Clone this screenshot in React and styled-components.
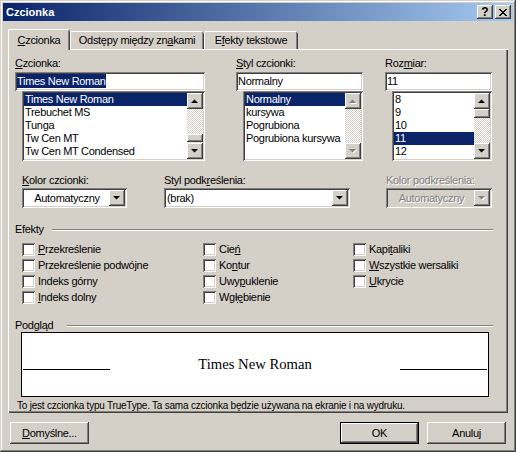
import React from 'react';
import styled, { createGlobalStyle, css } from 'styled-components';

const FACE = '#d4d0c8';
const NAVY = '#0a246a';

const GlobalStyle = createGlobalStyle`
  html, body {
    margin: 0;
    padding: 0;
    background: ${FACE};
  }
  body {
    font-family: "Liberation Sans", Arial, sans-serif;
    font-size: 11px;
    letter-spacing: -0.3px;
    color: #000;
  }
`;

const raised = css`
  background: ${FACE};
  box-shadow: inset -1px -1px #404040, inset 1px 1px #fff, inset -2px -2px #808080,
    inset 2px 2px ${FACE};
`;

const sunken = css`
  box-shadow: inset 1px 1px #808080, inset -1px -1px #fff, inset 2px 2px #404040,
    inset -2px -2px ${FACE};
`;

const Window = styled.div`
  width: 516px;
  height: 452px;
  box-sizing: border-box;
  padding: 3px;
  background: ${FACE};
  box-shadow: inset -1px -1px #404040, inset 1px 1px ${FACE}, inset -2px -2px #808080,
    inset 2px 2px #fff;
  display: flex;
  flex-direction: column;
`;

const TitleBar = styled.div`
  height: 18px;
  flex-shrink: 0;
  display: flex;
  align-items: center;
  padding: 0 2px;
  background: linear-gradient(to right, ${NAVY}, #a6caf0);
  color: #fff;
  font-weight: bold;
  letter-spacing: 0;
`;

const Title = styled.span`
  flex: 1;
  padding-left: 1px;
`;

const CaptionButton = styled.div`
  ${raised}
  width: 16px;
  height: 14px;
  display: flex;
  align-items: center;
  justify-content: center;
  margin-left: ${(p) => p.$gap || 0}px;
  color: #000;
  font-weight: bold;
  font-size: 12px;
  line-height: 14px;
`;

const TabStrip = styled.div`
  display: flex;
  align-items: flex-end;
  height: 21px;
  margin: 8px 0 -1px 5px;
  position: relative;
  z-index: 1;
  flex-shrink: 0;
`;

const Tab = styled.div`
  width: ${(p) => p.$w}px;
  box-sizing: border-box;
  height: ${(p) => (p.$active ? 21 : 18)}px;
  margin-bottom: ${(p) => (p.$active ? 0 : 1)}px;
  padding-top: ${(p) => (p.$active ? 5 : 3)}px;
  text-align: center;
  line-height: 13px;
  white-space: nowrap;
  background: ${FACE};
  border-radius: 2px 2px 0 0;
  box-shadow: inset 1px 0 #fff, inset 0 1px #fff, inset -1px 0 #404040, inset -2px 0 #808080;
`;

const U = styled.span`
  text-decoration: underline;
`;

const Panel = styled.div`
  width: 500px;
  height: 364px;
  box-sizing: border-box;
  margin-left: 5px;
  padding-top: 8px;
  flex-shrink: 0;
  display: flex;
  flex-direction: column;
  box-shadow: inset 1px 1px #fff, inset -1px -1px #404040, inset -2px -2px #808080;
`;

const Row = styled.div`
  display: flex;
  margin-top: ${(p) => p.$mt || 0}px;
`;

const Column = styled.div`
  display: flex;
  flex-direction: column;
  width: ${(p) => p.$w}px;
  margin-left: ${(p) => p.$ml}px;
`;

const Label = styled.div`
  height: 13px;
  line-height: 13px;
  margin-bottom: ${(p) => p.$mb ?? 2}px;
  white-space: nowrap;
  color: ${(p) => (p.$disabled ? '#808080' : '#000')};
  text-shadow: ${(p) => (p.$disabled ? '1px 1px #fff' : 'none')};
`;

const TextField = styled.div`
  ${sunken}
  background: #fff;
  height: 19px;
  box-sizing: border-box;
  padding: 2px 2px 0 2px;
  line-height: 15px;
  white-space: nowrap;
`;

const Selected = styled.span`
  background: ${NAVY};
  color: #fff;
  padding: 1px 0;
`;

const ListBox = styled.div`
  ${sunken}
  background: #fff;
  height: 70px;
  margin-left: 7px;
  box-sizing: border-box;
  padding: 2px;
  display: flex;
`;

const Items = styled.div`
  flex: 1;
  overflow: hidden;
`;

const Item = styled.div`
  height: 13px;
  line-height: 13px;
  padding-left: 1px;
  white-space: nowrap;
  background: ${(p) => (p.$sel ? NAVY : 'transparent')};
  color: ${(p) => (p.$sel ? '#fff' : '#000')};
`;

const ScrollBar = styled.div`
  width: 16px;
  display: flex;
  flex-direction: column;
`;

const ArrowButton = styled.div`
  ${raised}
  width: 16px;
  height: 16px;
  flex-shrink: 0;
  display: flex;
  align-items: center;
  justify-content: center;
`;

const Track = styled.div`
  flex: 1;
  display: flex;
  flex-direction: column;
  background: repeating-conic-gradient(#fff 0 25%, ${FACE} 0 50%) 0 0 / 2px 2px;
`;

const Thumb = styled.div`
  ${raised}
  height: ${(p) => p.$h}px;
  margin-top: ${(p) => p.$top}px;
`;

const Combo = styled.div`
  ${sunken}
  height: 20px;
  box-sizing: border-box;
  padding: 2px;
  display: flex;
  background: ${(p) => (p.$disabled ? FACE : '#fff')};
`;

const ComboText = styled.div`
  flex: 1;
  line-height: 16px;
  padding-left: 1px;
  white-space: nowrap;
  text-align: ${(p) => (p.$center ? 'center' : 'left')};
  color: ${(p) => (p.$disabled ? '#808080' : '#000')};
  text-shadow: ${(p) => (p.$disabled ? '1px 1px #fff' : 'none')};
`;

const GroupHeader = styled.div`
  display: flex;
  align-items: center;
  height: 13px;
  padding-left: 7px;
  margin-right: 15px;
  margin-top: ${(p) => p.$mt}px;
`;

const GroupLabel = styled.span`
  width: ${(p) => p.$w}px;
  line-height: 13px;
  flex-shrink: 0;
`;

const GroupLine = styled.div`
  flex: 1;
  border-top: 1px solid #808080;
  border-bottom: 1px solid #fff;
`;

const CheckGrid = styled.div`
  display: flex;
  margin-top: 5px;
  padding-left: 14px;
`;

const CheckColumn = styled.div`
  width: ${(p) => p.$w}px;
  display: flex;
  flex-direction: column;
`;

const Check = styled.div`
  display: flex;
  align-items: center;
  height: 16px;
  line-height: 13px;
  white-space: nowrap;
`;

const CheckBox = styled.span`
  ${sunken}
  width: 13px;
  height: 13px;
  flex-shrink: 0;
  margin-right: 3px;
  background: #fff;
`;

const Preview = styled.div`
  margin-left: 13px;
  width: 468px;
  height: 65px;
  box-sizing: border-box;
  border: 1px solid #000;
  background: #fff;
  display: flex;
  align-items: center;
  padding: 0 1px;
`;

const SampleLine = styled.div`
  width: 87px;
  height: 1px;
  margin-top: 10px;
  background: #000;
`;

const SampleText = styled.div`
  flex: 1;
  text-align: center;
  font-family: "Liberation Serif", "Times New Roman", serif;
  font-size: 14.67px;
  letter-spacing: 0;
`;

const Info = styled.div`
  margin: 2px 0 0 9px;
  line-height: 13px;
  font-size: 10px;
  letter-spacing: -0.22px;
  white-space: nowrap;
`;

const ButtonRow = styled.div`
  display: flex;
  margin-top: 9px;
  padding: 0 7px;
`;

const Button = styled.div`
  ${raised}
  width: 79px;
  height: 22px;
  box-sizing: border-box;
  margin-left: ${(p) => p.$ml || 0}px;
  display: flex;
  align-items: center;
  justify-content: center;
  ${(p) =>
    p.$default &&
    css`
      box-shadow: inset 0 0 0 1px #000, inset -2px -2px #404040, inset 2px 2px #fff,
        inset -3px -3px #808080;
    `}
`;

const Spacer = styled.div`
  flex: 1;
`;

function Arrow({ dir = 'down', disabled }) {
  const pts = dir === 'up' ? '0,4 7,4 3.5,0.5' : '0,0 7,0 3.5,3.5';
  return (
    <svg width="8" height="5" viewBox="0 0 8 5" style={{ overflow: 'visible' }}>
      {disabled && <polygon points={pts} fill="#fff" transform="translate(1,1)" />}
      <polygon points={pts} fill={disabled ? '#808080' : '#000'} />
    </svg>
  );
}

function Scroller({ thumbTop, thumbH, disabled }) {
  return (
    <ScrollBar>
      <ArrowButton>
        <Arrow dir="up" disabled={disabled} />
      </ArrowButton>
      <Track>{!disabled && <Thumb $top={thumbTop} $h={thumbH} />}</Track>
      <ArrowButton>
        <Arrow dir="down" disabled={disabled} />
      </ArrowButton>
    </ScrollBar>
  );
}

function List({ items, selected, scroll }) {
  return (
    <ListBox>
      <Items>
        {items.map((it) => (
          <Item key={it} $sel={it === selected}>
            {it}
          </Item>
        ))}
      </Items>
      <Scroller {...scroll} />
    </ListBox>
  );
}

function Dropdown({ value, center, disabled }) {
  return (
    <Combo $disabled={disabled}>
      <ComboText $center={center} $disabled={disabled}>
        {value}
      </ComboText>
      <ArrowButton>
        <Arrow disabled={disabled} />
      </ArrowButton>
    </Combo>
  );
}

const effects = [
  {
    w: 181,
    items: [
      [<U key="u">P</U>, 'rzekreślenie'],
      ['Przekreślenie podwó', <U key="u">j</U>, 'ne'],
      ['Indeks ', <U key="u">g</U>, 'órny'],
      [<U key="u">I</U>, 'ndeks dolny'],
    ],
  },
  {
    w: 150,
    items: [
      ['Cie', <U key="u">ń</U>],
      ['Ko', <U key="u">n</U>, 'tur'],
      ['Uwy', <U key="u">p</U>, 'uklenie'],
      ['Wgł', <U key="u">ę</U>, 'bienie'],
    ],
  },
  {
    w: 140,
    items: [
      ['Kapi', <U key="u">t</U>, 'aliki'],
      [<U key="u">W</U>, 'szystkie wersaliki'],
      [<U key="u">U</U>, 'krycie'],
    ],
  },
];

export default function App() {
  return (
    <>
      <GlobalStyle />
      <Window>
        <TitleBar>
          <Title>Czcionka</Title>
          <CaptionButton>?</CaptionButton>
          <CaptionButton $gap={2}>
            <svg width="8" height="7" viewBox="0 0 8 7" shapeRendering="crispEdges">
              <path
                d="M0 0h2v1h-2zM6 0h2v1h-2zM1 1h2v1h-2zM5 1h2v1h-2zM2 2h4v1h-4zM3 3h2v1h-2zM2 4h4v1h-4zM1 5h2v1h-2zM5 5h2v1h-2zM0 6h2v1h-2zM6 6h2v1h-2z"
                fill="#000"
              />
            </svg>
          </CaptionButton>
        </TitleBar>

        <TabStrip>
          <Tab $active $w={62}>
            <U>C</U>zcionka
          </Tab>
          <Tab $w={134}>
            Odstępy między zn<U>a</U>kami
          </Tab>
          <Tab $w={94}>
            E<U>f</U>ekty tekstowe
          </Tab>
        </TabStrip>

        <Panel>
          <Row>
            <Column $w={190} $ml={7}>
              <Label>
                <U>C</U>zcionka:
              </Label>
              <TextField>
                <Selected>Times New Roman</Selected>
              </TextField>
              <List
                items={['Times New Roman', 'Trebuchet MS', 'Tunga', 'Tw Cen MT', 'Tw Cen MT Condensed']}
                selected="Times New Roman"
                scroll={{ thumbTop: 25, thumbH: 8 }}
              />
            </Column>
            <Column $w={127} $ml={31}>
              <Label>
                <U>S</U>tyl czcionki:
              </Label>
              <TextField>Normalny</TextField>
              <List
                items={['Normalny', 'kursywa', 'Pogrubiona', 'Pogrubiona kursywa']}
                selected="Normalny"
                scroll={{ disabled: true }}
              />
            </Column>
            <Column $w={107} $ml={22}>
              <Label>
                Roz<U>m</U>iar:
              </Label>
              <TextField>11</TextField>
              <List
                items={['8', '9', '10', '11', '12']}
                selected="11"
                scroll={{ thumbTop: 0, thumbH: 9 }}
              />
            </Column>
          </Row>

          <Row $mt={13}>
            <Column $w={105} $ml={14}>
              <Label $mb={1}>
                <U>K</U>olor czcionki:
              </Label>
              <Dropdown value="Automatyczny" center />
            </Column>
            <Column $w={186} $ml={37}>
              <Label $mb={1}>
                Styl podk<U>r</U>eślenia:
              </Label>
              <Dropdown value="(brak)" />
            </Column>
            <Column $w={106} $ml={36}>
              <Label $mb={1} $disabled>
                Kolor podkreślenia:
              </Label>
              <Dropdown value="Automatyczny" center disabled />
            </Column>
          </Row>

          <GroupHeader $mt={15}>
            <GroupLabel $w={37}>Efekty</GroupLabel>
            <GroupLine />
          </GroupHeader>
          <CheckGrid>
            {effects.map((col, i) => (
              <CheckColumn key={i} $w={col.w}>
                {col.items.map((parts, j) => (
                  <Check key={j}>
                    <CheckBox />
                    <span>{parts}</span>
                  </Check>
                ))}
              </CheckColumn>
            ))}
          </CheckGrid>

          <GroupHeader $mt={14}>
            <GroupLabel $w={52}>Podgląd</GroupLabel>
            <GroupLine />
          </GroupHeader>
          <Preview>
            <SampleLine />
            <SampleText>Times New Roman</SampleText>
            <SampleLine />
          </Preview>
          <Info>
            To jest czcionka typu TrueType. Ta sama czcionka będzie używana na ekranie i na wydruku.
          </Info>
        </Panel>

        <ButtonRow>
          <Button>
            <span>
              <U>D</U>omyślne...
            </span>
          </Button>
          <Spacer />
          <Button $default>OK</Button>
          <Button $ml={8}>Anuluj</Button>
        </ButtonRow>
      </Window>
    </>
  );
}
